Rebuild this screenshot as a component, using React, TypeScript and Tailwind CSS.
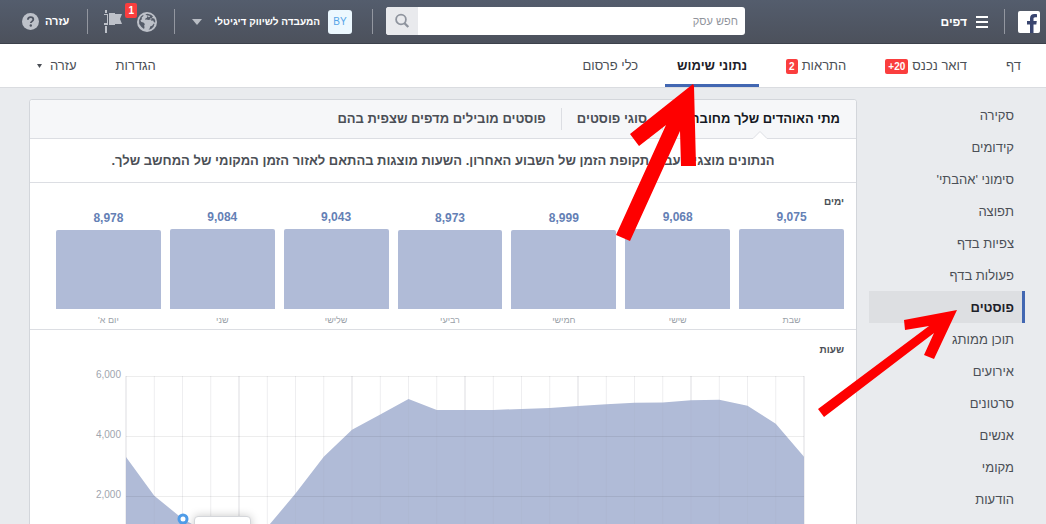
import React from "react";

const days = [
  { name: "שבת", value: "9,075", height: "h-20" },
  { name: "שישי", value: "9,068", height: "h-20" },
  { name: "חמישי", value: "8,999", height: "h-[79px]" },
  { name: "רביעי", value: "8,973", height: "h-[79px]" },
  { name: "שלישי", value: "9,043", height: "h-20" },
  { name: "שני", value: "9,084", height: "h-20" },
  { name: "יום א'", value: "8,978", height: "h-[79px]" },
];

const sections = [
  "סקירה",
  "קידומים",
  "סימוני 'אהבתי'",
  "תפוצה",
  "צפיות בדף",
  "פעולות בדף",
  "פוסטים",
  "תוכן ממותג",
  "אירועים",
  "סרטונים",
  "אנשים",
  "מקומי",
  "הודעות",
];

// Fans online for each hour, 0 to 24.
const hours = [
  3300, 2010, 1240, 720, 560, 960, 2080, 3310, 4210, 4720, 5230, 4870, 4870, 4870, 4900, 4930, 5000, 5060,
  5110, 5120, 5190, 5210, 5010, 4410, 3310,
];
const W = 678;
const H = 180;
const px = (i: number) => (i * W) / 24;
const py = (v: number) => H - (v * H) / 6000;
const area = `0,${H} ${hours.map((v, i) => `${px(i)},${py(v)}`).join(" ")} ${W},${H}`;

function Divider() {
  return <span className="h-[25px] w-px shrink-0 bg-[#9397a0]" />;
}

function Count({ children }: { children: React.ReactNode }) {
  return (
    <span
      dir="ltr"
      className="rounded-xs bg-[#fa3e3e] px-[3px] text-[10px] leading-[15px] font-bold text-white"
    >
      {children}
    </span>
  );
}

function TopBar() {
  return (
    <header className="flex h-11 items-center border-b border-[#3c414b] bg-linear-to-b from-[#545d6d] to-[#4c515c] text-xs text-white">
      <div className="flex w-[301px] shrink-0 items-center pr-[6px]">
        <a href="#home" aria-label="Facebook">
          <svg width="22" height="22" viewBox="0 0 22 22" className="block">
            <rect width="22" height="22" rx="2" fill="#fff" />
            <path
              d="M12 22v-8.6H9V10h3V7.4C12 4.5 13.7 3 16.4 3c1.2 0 2 .1 2.600.2v3.100h-1.700c-1.500 0-1.800.7-1.800 1.800V10h3.300l-.5 3.400h-2.800V22z"
              fill="#3a4670"
            />
          </svg>
        </a>
        <span className="mr-[13px] flex">
          <Divider />
        </span>
        <button className="mr-4 flex items-center gap-[9px] text-xs font-bold">
          <svg width="12" height="12" viewBox="0 0 12 12" fill="#fff">
            <path d="M0 0h12v2H0zM0 5h12v2H0zM0 10h12v2H0z" />
          </svg>
          דפים
        </button>
      </div>
      <form className="-mt-px flex h-7 flex-1 overflow-hidden rounded-[3px] bg-white" role="search">
        <input
          type="text"
          aria-label="חפש עסק"
          placeholder="חפש עסק"
          className="min-w-0 flex-1 px-[7px] text-[11px] text-[#1d2129] outline-none placeholder:text-[#90949c]"
        />
        <button type="button" aria-label="חיפוש" className="flex w-8 items-center justify-center bg-[#e9eaed]">
          <svg width="16" height="16" viewBox="0 0 16 16" fill="none" stroke="#8f949e">
            <circle cx="7" cy="6.500" r="4.900" strokeWidth="1.800" />
            <path d="M10.300 10l4 4" strokeWidth="2.400" />
          </svg>
        </button>
      </form>
      <div className="flex w-[386px] shrink-0 items-center pr-[13px]">
        <Divider />
        <button className="mr-5 flex items-center gap-2 text-[10px] font-bold whitespace-nowrap">
          <span className="flex size-6 items-center justify-center rounded-[3px] bg-[#ecf8ff] text-[10px] font-normal text-[#55a4e8]">
            BY
          </span>
          המעבדה לשיווק דיגיטלי
          <svg width="10" height="6" viewBox="0 0 10 6" fill="#b9bdc4" className="mr-1">
            <path d="M0 0h10L5 6z" />
          </svg>
        </button>
        <span className="mr-auto flex">
          <Divider />
        </span>
        <button aria-label="התראות" className="relative mr-[17px]">
          <svg width="20" height="20" viewBox="0 0 20 20" className="block">
            <circle cx="10" cy="10" r="10" fill="#bdc1c9" />
            <path
              d="M8.300 2.300l2.200-.6 3.500 1 2.300 1.900-1.300.5.500 1.100 1.800.2 1 2.300-.2 2-1.300-.6-.6-1.700-1.700.3-1.200-1.200-1.700.5-2.200-.6-1.300.4.300-1.300 1.500-.7.200-1.300 1.400-.8-1.400-.2z"
              fill="#555c69"
            />
            <path d="M2.100 8l1.700-3.400L6 3l.6.7-1.900 1.800.2 1.700-1.500 1.200 1 1.600 2 .4 1.500 1.600-.7 1.500.3 1.900-.5 1.500-2.500-1.800L2.200 12z" fill="#555c69" />
            <path d="M11.500 17.800l1.300-1.500.3-1.700 2-.8 1.800-2.300.6.5-1 2.800-2.300 2.300z" fill="#555c69" />
            <path d="M10.500 4l1.500-.5 1.200 1.200-1.500.5zM13 6.500l1.500-.2.3 1-1.600.3z" fill="#bdc1c9" />
          </svg>
          <span className="absolute -top-[9px] right-5 h-[15px] w-3 rounded-xs bg-[#fa3e3e] text-center text-[10px] leading-[15px] font-bold">
            1
          </span>
        </button>
        <button aria-label="דגל" className="mr-[15px]">
          <svg width="18" height="23" viewBox="0 0 18 23" className="block" fill="#bdc1c9">
            <path d="M1 0h2v3H1zM0 4h4v1H0zM0 13h4v2H0zM3 5h1v8H3zM1 16h2v7H1z" />
            <path d="M5 3h6v1h7l-2 5 2 5h-7v1H5z" />
          </svg>
        </button>
        <span className="mr-4 flex">
          <Divider />
        </span>
        <button className="mr-[18px] ml-[22px] flex items-center gap-[6px] text-[11px] font-bold">
          עזרה
          <svg width="17" height="17" viewBox="0 0 17 17">
            <circle cx="8.500" cy="8.500" r="8.500" fill="#bdc1c9" />
            <path d="M5.900 6.800c0-1.600 1.100-2.600 2.700-2.600s2.700 1 2.700 2.300c0 1.800-2.500 1.900-2.500 3.600" fill="none" stroke="#4f5562" strokeWidth="1.800" />
            <circle cx="8.800" cy="12.500" r="1.200" fill="#4f5562" />
          </svg>
        </button>
      </div>
    </header>
  );
}

function PageNav() {
  const tab = "flex h-full items-center gap-1 px-3 border-b-3 border-transparent pt-1";
  return (
    <nav className="flex h-11 items-center gap-[15px] border-b border-[#dadce0] bg-white pr-[13px] pl-[25px] text-[13px] text-[#4b4f56]">
      <a href="#page" className={tab}>דף</a>
      <a href="#inbox" className={tab}>
        דואר נכנס <Count>+20</Count>
      </a>
      <a href="#notifications" className={tab}>
        התראות <Count>2</Count>
      </a>
      <a
        href="#insights"
        aria-current="page"
        className="flex h-full items-center border-b-3 border-[#4267b2] px-3 pt-1 font-bold text-[#1d2129]"
      >
        נתוני שימוש
      </a>
      <a href="#tools" className={tab}>כלי פרסום</a>
      <span className="flex-1" />
      <a href="#settings" className={tab}>הגדרות</a>
      <button className="flex h-full items-center gap-2 border-b-3 border-transparent px-3 pt-1">
        עזרה
        <svg width="5" height="4" viewBox="0 0 5 4" fill="#4b4f56">
          <path d="M0 0h5L2.500 4z" />
        </svg>
      </button>
    </nav>
  );
}

function DaysChart() {
  return (
    <section className="border-b border-[#dcdee3] pt-3 pr-3 pb-[3px] pl-[26px]">
      <h2 className="text-[10px] leading-[14px] font-bold text-[#4b4f56]">ימים</h2>
      <div className="flex items-end gap-[9px]">
        {days.map((d) => (
          <div key={d.name} className="flex-1 text-center">
            <div className="mb-1 text-xs leading-4 font-bold text-[#6480b5]">{d.value}</div>
            <div className={"rounded-t-xs bg-[#b0bbd7] " + d.height} />
            <div className="mt-[5px] text-[9px] leading-3 text-[#9a9fa8]">{d.name}</div>
          </div>
        ))}
      </div>
    </section>
  );
}

function HoursChart() {
  return (
    <section className="pt-[13px] pb-6">
      <h2 className="pr-3 text-[10px] leading-[14px] font-bold text-[#4b4f56]">שעות</h2>
      <div dir="ltr" className="mt-[19px] flex pr-[52px]">
        <div className="-mt-2 w-[91px] shrink-0 text-right text-[10px] leading-[14px] text-[#a0a5ae]">
          <div className="h-[60px]">6,000</div>
          <div className="h-[60px]">4,000</div>
          <div className="h-[60px]">2,000</div>
        </div>
        <div className="relative ml-[5px] flex-1">
          <svg
            viewBox={`0 0 ${W} ${H}`}
            preserveAspectRatio="none"
            className="block h-[180px] w-full overflow-visible"
          >
            {hours.map((_, i) => (
              <path
                key={i}
                d={`M${px(i)} 0V${H}`}
                stroke={i % 4 === 0 ? "#f1f1f3" : "#f4f4f6"}
                strokeWidth={i % 4 === 0 ? 2 : 1}
              />
            ))}
            <polygon points={area} fill="#b0bbd7" />
            {hours.map((_, i) => (
              <path key={i} d={`M${px(i)} 0V${H}`} stroke="#999" strokeOpacity="0.060" />
            ))}
            {[0, 60, 120, 180].map((y) => (
              <path key={y} d={`M0 ${y + 0.5}H${W}`} stroke="#000" strokeOpacity="0.070" />
            ))}
          </svg>
          <span
            className="absolute size-[11px] -translate-x-1/2 -translate-y-1/2 rounded-full border-3 border-[#4f9ce8] bg-white"
            style={{ left: `${(px(2) / W) * 100}%`, top: `${py(hours[2]) + 0.5}px` }}
          />
          <div className="absolute top-[140px] left-[10%] h-10 w-[57px] rounded-sm border border-[#d4d6da] bg-white shadow-[0_0_10px_rgba(0,0,0,0.22)]" />
        </div>
      </div>
    </section>
  );
}

function Arrows() {
  return (
    <svg
      width="440"
      height="524"
      viewBox="606 0 440 524"
      fill="#fe0000"
      className="pointer-events-none absolute top-0 right-0"
      aria-hidden="true"
    >
      <polygon points="693,84 630,134 639,146 666,125 616,235 630,241 680,131 681,166 696,166 694,86" />
      <polygon points="957,310 904,320 905,330 929,326 818,409 824,417 934,333 924,355 934,359" />
    </svg>
  );
}

export default function App() {
  return (
    <div
      dir="rtl"
      className="relative h-screen overflow-hidden bg-[#e9ebee] font-['Liberation_Sans',Arial,sans-serif]"
    >
      <TopBar />
      <PageNav />
      <div className="flex items-start gap-3 pt-[11px] pr-[21px] pl-[29px]">
        <aside className="w-[156px] shrink-0">
          <ul className="text-[13px] leading-8 text-[#4b4f56]">
            {sections.map((s) => (
              <li key={s}>
                {s === "פוסטים" ? (
                  <a
                    href="#posts"
                    aria-current="page"
                    className="block h-8 border-r-3 border-[#4267b2] bg-[#dddfe2] pr-2 leading-[34px] font-bold text-[#1d2129]"
                  >
                    {s}
                  </a>
                ) : (
                  <a href="#section" className="block h-8 pr-[11px] leading-[34px]">
                    {s}
                  </a>
                )}
              </li>
            ))}
          </ul>
        </aside>
        <main className="min-w-0 flex-1 rounded-[3px] border border-[#d3d6db] bg-white">
          <div className="flex h-[39px] items-center rounded-t-[3px] border-b border-[#dcdee3] bg-[#f6f7f9] text-[13px] font-bold text-[#4b4f56]">
            <button className="relative h-full px-4 text-[#141823]">
              מתי האוהדים שלך מחוברים
              <svg
                width="14"
                height="8"
                viewBox="0 0 14 8"
                className="absolute -bottom-px left-1/2 -translate-x-1/2"
              >
                <path d="M0 7.500L7 .5l7 7V8H0z" fill="#fff" />
                <path d="M0 7.500L7 .5l7 7" fill="none" stroke="#dcdee3" />
              </svg>
            </button>
            <button className="border-r border-[#dcdee3] px-[15px] leading-[22px]">סוגי פוסטים</button>
            <button className="border-r border-[#dcdee3] px-[15px] leading-[22px]">פוסטים מובילים מדפים שצפית בהם</button>
          </div>
          <p className="border-b border-[#dcdee3] text-center text-[13px] leading-[43px] font-bold whitespace-nowrap text-[#4b4f56]">
            הנתונים מוצגים עבור תקופת הזמן של השבוע האחרון. השעות מוצגות בהתאם לאזור הזמן המקומי של המחשב שלך.
          </p>
          <DaysChart />
          <HoursChart />
        </main>
      </div>
      <Arrows />
    </div>
  );
}
